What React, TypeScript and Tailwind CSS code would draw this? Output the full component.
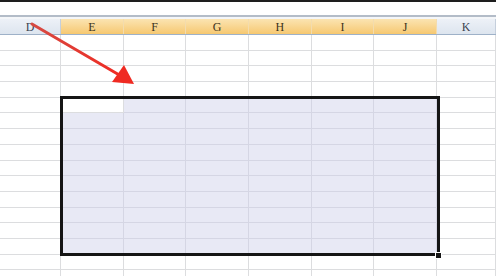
import React from 'react';

const COLS = ['D', 'E', 'F', 'G', 'H', 'I', 'J', 'K'];
const ROW_COUNT = 16;
const SEL_START = 4; // first selected row index
const SEL_END = 13; // last selected row index

function isSelected(row: number, col: number) {
  return row >= SEL_START && row <= SEL_END && col >= 1 && col <= 6;
}

export default function App() {
  return (
    <div className="relative h-[276px] w-[496px] overflow-hidden bg-white font-['Liberation_Serif',serif]">
      {/* Ribbon edge */}
      <div className="h-[2px] bg-[#1e1e1e]" />
      <div className="h-[13px] bg-white" />
      <div className="h-[2px] bg-[#b3bcc8]" />
      <div className="h-[2px] bg-[#f4f6f9]" />

      {/* Column headers */}
      <div className="grid h-[16px] grid-cols-[61px_repeat(6,62.67px)_1fr] border-b border-[#9eb1c8]">
        {COLS.map((c, i) => {
          const active = i >= 1 && i <= 6;
          return (
            <div
              key={c}
              className={[
                'flex items-center justify-center border-r pt-[1px] text-[12px] leading-none',
                active
                  ? 'bg-gradient-to-b from-[#fbe4b1] to-[#f6c870] border-[#f3dcae] text-[#3d3420]'
                  : 'bg-gradient-to-b from-[#edf1f7] to-[#dde5ef] border-[#c5cfdc] text-[#3a4250]',
              ].join(' ')}
            >
              {c}
            </div>
          );
        })}
      </div>

      {/* Cells */}
      <div className="flex flex-col">
        {Array.from({ length: ROW_COUNT }).map((_, r) => (
          <div key={r} className="grid h-[15.7px] grid-cols-[61px_repeat(6,62.67px)_1fr]">
            {COLS.map((c, ci) => {
              const sel = isSelected(r, ci) && !(r === SEL_START && ci === 1);
              return (
                <div
                  key={c}
                  className={[
                    'border-b border-r',
                    sel ? 'bg-[#e8e9f5] border-[#d5d6e4]' : 'bg-white border-[#dcdddf]',
                  ].join(' ')}
                />
              );
            })}
          </div>
        ))}
      </div>

      {/* Selection outline */}
      <div className="absolute left-[60px] top-[96px] h-[160px] w-[380px] border-[3px] border-[#151515]" />
      {/* Fill handle */}
      <div className="absolute left-[435px] top-[252px] h-[7px] w-[7px] border border-white bg-[#151515]" />

      {/* Red arrow */}
      <svg className="absolute left-0 top-0" width="496" height="276" viewBox="0 0 496 276">
        <defs>
          <linearGradient id="arrowGrad" x1="0" y1="0" x2="1" y2="1">
            <stop offset="0" stopColor="#d64a42" />
            <stop offset="1" stopColor="#f02a22" />
          </linearGradient>
        </defs>
        <line x1="32" y1="24" x2="121" y2="76" stroke="url(#arrowGrad)" strokeWidth="3" strokeLinecap="round" />
        <polygon points="134,84 112,82 124,65" fill="#ef2a22" />
      </svg>
    </div>
  );
}
